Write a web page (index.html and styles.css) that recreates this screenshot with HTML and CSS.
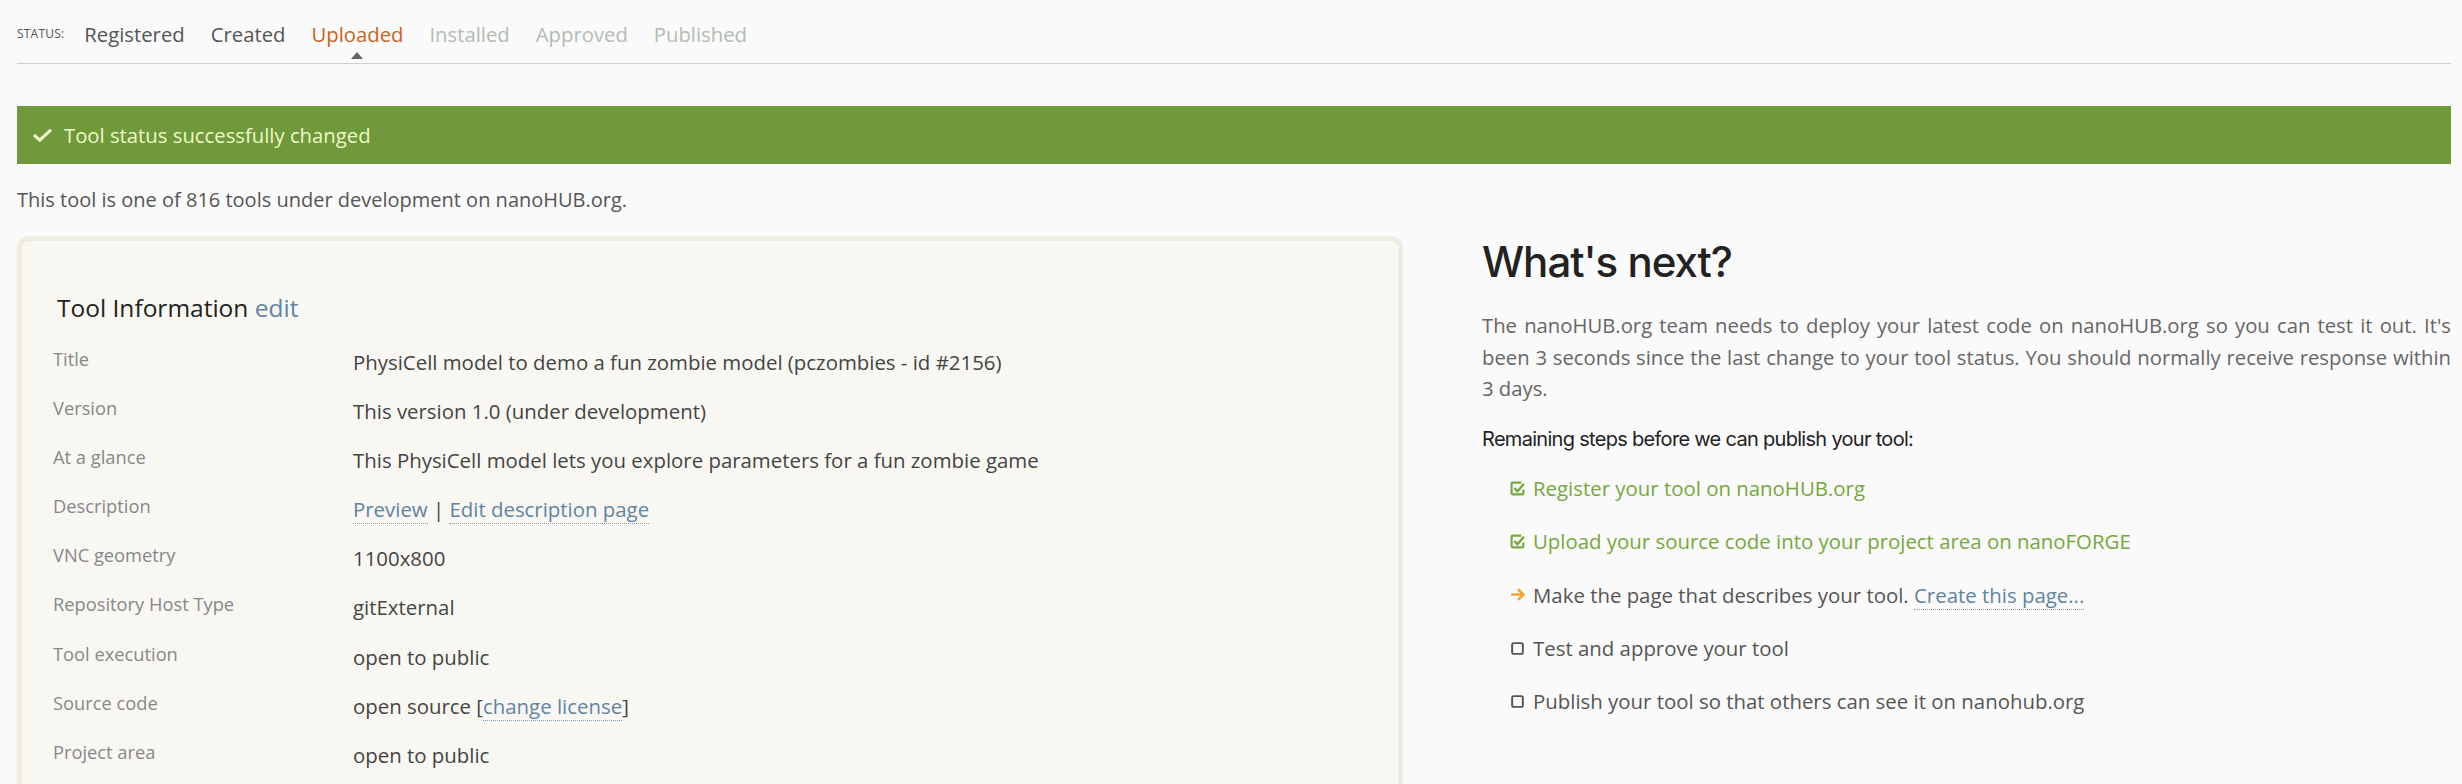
FILE: index.html
```html
<!DOCTYPE html>
<html>
<head>
<meta charset="utf-8">
<link rel="stylesheet" href="styles.css">
</head>
<body>
<div class="page">
  <div class="status-bar">
    <span class="status-label">STATUS:</span>
    <span class="step done">Registered</span>
    <span class="step done">Created</span>
    <span class="step current">Uploaded</span>
    <span class="step todo">Installed</span>
    <span class="step todo">Approved</span>
    <span class="step todo">Published</span>
  </div>

  <div class="banner">
    <svg class="banner-icon" viewBox="0 0 20 14" width="19" height="13"><path d="M2 7.5 L7 12 L18 2" fill="none" stroke="#eef7c8" stroke-width="3.4" stroke-linecap="square"/></svg>
    <span>Tool status successfully changed</span>
  </div>

  <p class="intro">This tool is one of 816 tools under development on nanoHUB.org.</p>

  <div class="columns">
    <div class="card">
      <h3 class="card-title">Tool Information <a class="link">edit</a></h3>
      <div class="info">
        <div class="label">Title</div><div class="value">PhysiCell model to demo a fun zombie model (pczombies - id #2156)</div>
        <div class="label">Version</div><div class="value">This version 1.0 (under development)</div>
        <div class="label">At a glance</div><div class="value">This PhysiCell model lets you explore parameters for a fun zombie game</div>
        <div class="label">Description</div><div class="value"><a class="link">Preview</a> | <a class="link">Edit description page</a></div>
        <div class="label">VNC geometry</div><div class="value">1100x800</div>
        <div class="label">Repository Host Type</div><div class="value">gitExternal</div>
        <div class="label">Tool execution</div><div class="value">open to public</div>
        <div class="label">Source code</div><div class="value">open source [<a class="link">change license</a>]</div>
        <div class="label">Project area</div><div class="value">open to public</div>
      </div>
    </div>

    <div class="next">
      <h2 class="next-title">What's next?</h2>
      <p class="next-text">The nanoHUB.org team needs to deploy your latest code on nanoHUB.org so you can test it out. It's been 3 seconds since the last change to your tool status. You should normally receive response within 3 days.</p>
      <p class="steps-title">Remaining steps before we can publish your tool:</p>
      <ul class="steps">
        <li class="step-item ok">
          <svg class="ico" viewBox="0 0 14 14" width="15" height="15"><path d="M10.5 1.5 H2.5 Q1.5 1.5 1.5 2.5 V11.5 Q1.5 12.5 2.5 12.5 H11.5 Q12.5 12.5 12.5 11.5 V8" fill="none" stroke="#75a83a" stroke-width="2"/><path d="M4 6.5 L7 9.5 L13 2.5" fill="none" stroke="#75a83a" stroke-width="2.2"/></svg>
          <span>Register your tool on nanoHUB.org</span>
        </li>
        <li class="step-item ok">
          <svg class="ico" viewBox="0 0 14 14" width="15" height="15"><path d="M10.5 1.5 H2.5 Q1.5 1.5 1.5 2.5 V11.5 Q1.5 12.5 2.5 12.5 H11.5 Q12.5 12.5 12.5 11.5 V8" fill="none" stroke="#75a83a" stroke-width="2"/><path d="M4 6.5 L7 9.5 L13 2.5" fill="none" stroke="#75a83a" stroke-width="2.2"/></svg>
          <span>Upload your source code into your project area on nanoFORGE</span>
        </li>
        <li class="step-item">
          <svg class="ico" viewBox="0 0 14 14" width="15" height="15"><path d="M1 7 H12 M7.5 2 L12.5 7 L7.5 12" fill="none" stroke="#f2a331" stroke-width="2.4"/></svg>
          <span>Make the page that describes your tool. <a class="link">Create this page...</a></span>
        </li>
        <li class="step-item">
          <svg class="ico" viewBox="0 0 14 14" width="15" height="15"><rect x="2" y="2" width="10" height="10" rx="1.5" fill="none" stroke="#555" stroke-width="1.8"/></svg>
          <span>Test and approve your tool</span>
        </li>
        <li class="step-item">
          <svg class="ico" viewBox="0 0 14 14" width="15" height="15"><rect x="2" y="2" width="10" height="10" rx="1.5" fill="none" stroke="#555" stroke-width="1.8"/></svg>
          <span>Publish your tool so that others can see it on nanohub.org</span>
        </li>
      </ul>
    </div>
  </div>
</div>
</body>
</html>
```
FILE: styles.css
```css
* { box-sizing: border-box; }
html, body { margin: 0; padding: 0; }
body {
  background: #fafafa;
  font-family: "Open Sans", "Liberation Sans", sans-serif;
  color: #555;
  overflow: hidden;
  height: 784px;
}
.page { padding: 0 11px 0 17px; }

.status-bar {
  display: flex;
  align-items: center;
  height: 64px;
  padding-top: 4px;
  border-bottom: 1px solid #cfcfcf;
  font-size: 20.3px;
}
.status-label { font-size: 12px; color: #555; margin-right: 7px; letter-spacing: 0.2px; }
.step { padding: 0 13px; position: relative; }
.step.done { color: #555; }
.step.current { color: #c5651d; }
.step.todo { color: #b3bcb3; }
.step.current::after {
  content: "";
  position: absolute;
  left: 50%;
  bottom: -11px;
  margin-left: -6px;
  border-left: 6px solid transparent;
  border-right: 6px solid transparent;
  border-bottom: 7px solid #666;
}

.banner {
  margin-top: 42px;
  height: 58px;
  background: #6f993a;
  color: #eef7c8;
  display: flex;
  align-items: center;
  padding-left: 16px;
  font-size: 20.3px;
}
.banner-icon { margin-right: 12px; }

.intro { margin: 22px 0 0; font-size: 20px; line-height: 28px; color: #555; }

.columns {
  display: grid;
  grid-template-columns: 1386px 1fr;
  column-gap: 79px;
  margin-top: 22px;
}

.card {
  background: #f8f7f2;
  border: 5px solid #efece1;
  border-radius: 12px;
  padding: 47px 30px 40px 31px;
  height: 620px;
}
.card-title {
  margin: 0 0 18px 4px;
  font-weight: 400;
  font-size: 24.5px;
  color: #222;
  line-height: 40px;
}
.link { color: #5f84a2; text-decoration: none; border-bottom: 1px dotted #7d9ab3; }
.card-title .link { border-bottom: none; }

.info {
  display: grid;
  grid-template-columns: 300px 1fr;
  grid-auto-rows: 49.1px;
}
.label { font-size: 18.3px; color: #888; line-height: 26px; }
.value { font-size: 20.4px; color: #444; line-height: 32px; }

.next { padding-top: 4px; }
.next-title {
  margin: 0;
  font-family: "Inter", "Lato", sans-serif;
  font-weight: 500;
  font-size: 42px;
  letter-spacing: -1px;
  color: #222;
  line-height: 44px;
}
.next-text {
  margin: 26px 0 0;
  font-size: 20.3px;
  line-height: 31.5px;
  color: #666;
  text-align: justify;
}
.steps-title {
  margin: 20px 0 0;
  font-family: "Inter", "Lato", sans-serif;
  font-size: 20px;
  letter-spacing: -0.7px;
  color: #222;
  line-height: 28px;
}
.steps { list-style: none; margin: 9px 0 0; padding: 0 0 0 28px; }
.step-item { display: flex; align-items: center; height: 53.3px; font-size: 20.4px; color: #555; }
.step-item .ico { margin-right: 8px; flex: none; }
.step-item.ok { color: #75a83a; }
```
